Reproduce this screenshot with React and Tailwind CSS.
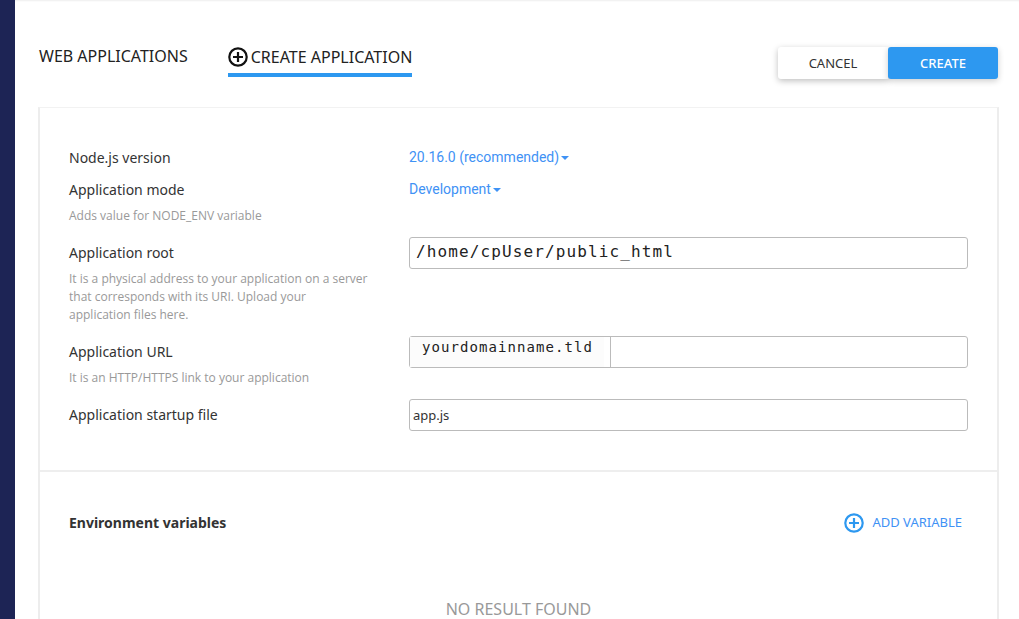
import React from 'react';

const sans = 'font-["Noto_Sans",sans-serif]';

function PlusCircle({ className }) {
    return (
        <svg viewBox="0 0 20 20" className={className} fill="none" stroke="currentColor" strokeWidth="2.2">
            <circle cx="10" cy="10" r="8.7" />
            <path d="M10 5v10M5 10h10" />
        </svg>
    );
}

function Dropdown({ label }) {
    return (
        <div className='flex items-center h-[20px] mt-[-1px] font-["Roboto",sans-serif] text-[14px] leading-[20px] text-[#3f92f5]'>
            {label}
            <span className="ml-[2px] mt-[1px] w-0 h-0 border-x-[4px] border-x-transparent border-t-[4px] border-t-[#3f92f5]"></span>
        </div>
    );
}

function Label({ title, help }) {
    return (
        <div className="w-[340px] shrink-0 pr-[40px]">
            <div className="text-[14px] leading-[20px] text-[#333]">{title}</div>
            {help && <div className='mt-[7px] font-["Open_Sans",sans-serif] text-[12px] leading-[18px] text-[#999]'>{help}</div>}
        </div>
    );
}

export default function App() {
    return (
        <div className={`flex h-[619px] overflow-hidden bg-white ${sans}`}>
            <div className="w-[15px] shrink-0 bg-[#1d2455]"></div>

            <div className="flex-1 min-w-0 pl-[23px] pr-[20px] shadow-[inset_0_2px_2px_-1px_rgba(0,0,0,0.07)]">
                {/* Tabs + actions */}
                <div className="flex items-start h-[107px] pt-[46px]">
                    <div className="text-[16px] leading-[20px] text-[#222] ml-[1px]">WEB APPLICATIONS</div>
                    <div className="ml-[40px] flex flex-col">
                        <div className="flex items-center h-[21px] text-[16px] text-[#222]">
                            <PlusCircle className="w-[20px] h-[20px] mr-[3px] text-[#111]" />
                            CREATE APPLICATION
                        </div>
                        <div className="mt-[6px] h-[4px] bg-[#2d98f0]"></div>
                    </div>
                    <div className="ml-auto mr-[1px] flex text-[13px]">
                        <button className="w-[110px] h-[32px] mt-[1px] pt-[1px] rounded-l-[3px] bg-white text-[#333] shadow-[0_2px_6px_rgba(0,0,0,0.25)]">CANCEL</button>
                        <button className="w-[110px] h-[32px] mt-[1px] pt-[1px] rounded-[3px] bg-[#2d98f0] text-white font-medium shadow-[0_2px_6px_rgba(0,0,0,0.2)]">CREATE</button>
                    </div>
                </div>

                {/* Card */}
                <div className="h-[600px] border-l-2 border-r-2 border-t border-[#ededed] border-t-[#f2f2f2]">
                    <div className="pl-[29px] pr-[29px] pt-[40px] h-[364px] border-b-2 border-[#eeeeee]">
                        <div className="flex h-[32px]">
                            <Label title="Node.js version" />
                            <Dropdown label="20.16.0 (recommended)" />
                        </div>
                        <div className="flex h-[64px]">
                            <Label title="Application mode" help="Adds value for NODE_ENV variable" />
                            <Dropdown label="Development" />
                        </div>
                        <div className="flex h-[99px] mt-[-1px]">
                            <Label
                                title="Application root"
                                help="It is a physical address to your application on a server that corresponds with its URI. Upload your application files here."
                            />
                            <input
                                readOnly
                                value="/home/cpUser/public_html"
                                className='flex-1 h-[32px] mt-[-6px] px-[6px] pb-[4px] border border-[#bbbbbb] rounded-[3px] font-["DejaVu_Sans_Mono",monospace] text-[16px] tracking-[1.12px] text-[#222] outline-none'
                            />
                        </div>
                        <div className="flex h-[63px]">
                            <Label title="Application URL" help="It is an HTTP/HTTPS link to your application" />
                            <div className="flex-1 flex h-[32px] mt-[-6px] border border-[#bbbbbb] rounded-[3px]">
                                <div className='w-[201px] h-full flex items-start border-r border-[#bbbbbb] rounded-l-[3px] font-["DejaVu_Sans_Mono",monospace] text-[14px] tracking-[1.07px] text-[#222]'>
                                    <span className="block w-[194px] h-[30px] pl-[12px] leading-[21px] bg-[#fcfcfc] whitespace-nowrap">yourdomainname.tld</span>
                                </div>
                            </div>
                        </div>
                        <div className="flex">
                            <Label title="Application startup file" />
                            <input
                                readOnly
                                value="app.js"
                                className="flex-1 h-[32px] mt-[-6px] px-[3px] border border-[#bbbbbb] rounded-[3px] text-[13px] text-[#333] outline-none"
                            />
                        </div>
                    </div>

                    {/* Environment variables */}
                    <div className="pl-[29px] pr-[35px] pt-[38px]">
                        <div className="flex items-center h-[24px]">
                            <div className="text-[14px] font-bold text-[#333]">Environment variables</div>
                            <div className="ml-auto mt-[1px] flex items-center text-[#3f92f5]">
                                <PlusCircle className="w-[20px] h-[20px] mr-[8px] text-[#2d98f0]" />
                                <span className="text-[13px] mt-[1px]">ADD VARIABLE</span>
                            </div>
                        </div>
                        <div className="mt-[63px] text-center text-[16px] leading-[24px] text-[#999] pl-[6px]">NO RESULT FOUND</div>
                    </div>
                </div>
            </div>
        </div>
    );
}
